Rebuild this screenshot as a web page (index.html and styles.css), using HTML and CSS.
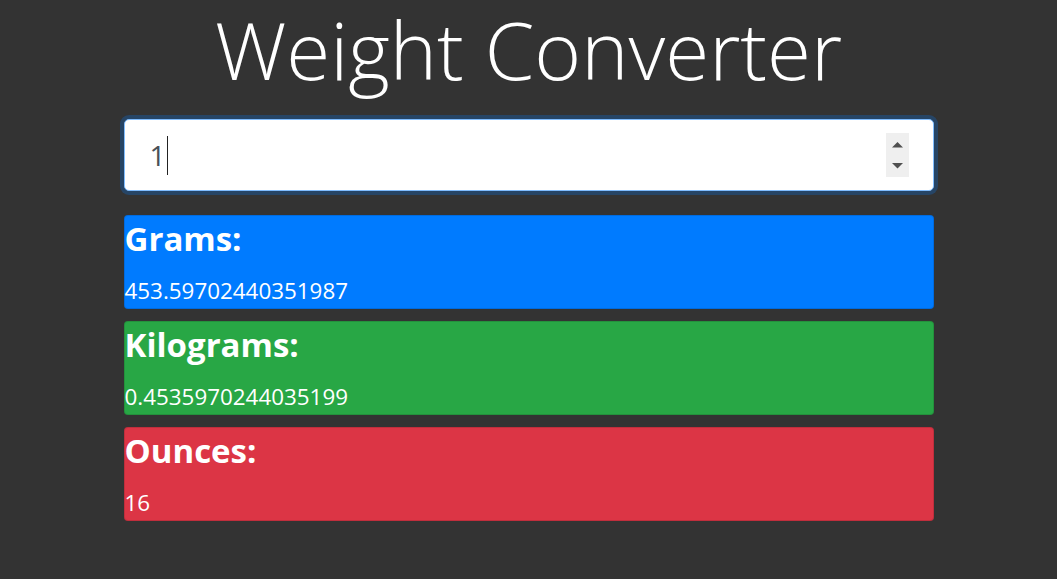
FILE: index.html
```html
<!DOCTYPE html>
<html lang="en">
<head>
<meta charset="utf-8">
<title>Weight Converter</title>
<link rel="stylesheet" href="styles.css">
</head>
<body>
<main class="page">
  <h1 class="title">Weight Converter</h1>
  <div class="field" role="spinbutton" aria-valuenow="1" aria-label="Pounds">
    <span class="field-value">1</span><span class="caret"></span>
    <span class="spinner" aria-hidden="true">
      <svg width="23" height="44" viewBox="0 0 23 44">
        <path d="M6 14.5 L11.5 9 L17 14.5 Z" fill="#505050"/>
        <path d="M6 30 L17 30 L11.5 35.5 Z" fill="#505050"/>
      </svg>
    </span>
  </div>
  <section class="results">
    <div class="result result-grams">
      <h2 class="result-label">Grams:</h2>
      <div class="result-value">453.59702440351987</div>
    </div>
    <div class="result result-kg">
      <h2 class="result-label">Kilograms:</h2>
      <div class="result-value">0.4535970244035199</div>
    </div>
    <div class="result result-oz">
      <h2 class="result-label">Ounces:</h2>
      <div class="result-value">16</div>
    </div>
  </section>
</main>
</body>
</html>
```
FILE: styles.css
```css
* { box-sizing: border-box; }
html, body {
  margin: 0;
  padding: 0;
  background: #333333;
  height: 100%;
}
body {
  font-family: "Open Sans", "Noto Sans", "Liberation Sans", sans-serif;
  color: #fff;
}
.page {
  width: 810px;
  margin: 0 auto;
  display: flex;
  flex-direction: column;
}
.title {
  margin: 0 0 24px;
  padding-top: 3px;
  font-size: 80px;
  font-weight: 300;
  line-height: 92px;
  text-align: center;
  color: #fff;
}
.field {
  height: 72px;
  background: #fff;
  border: 1px solid #80bdff;
  border-radius: 5px;
  box-shadow: 0 0 0 4px rgba(0, 123, 255, 0.25);
  display: flex;
  align-items: center;
  padding: 0 24px 0 25px;
  color: #495057;
  font-size: 28px;
  line-height: 40px;
}
.field-value {
  display: block;
}
.caret {
  width: 1px;
  height: 39px;
  background: #222;
  margin-left: 1px;
}
.spinner {
  margin-left: auto;
  width: 23px;
  height: 44px;
  background: #efefef;
  display: flex;
}
.results {
  margin-top: 24px;
  display: flex;
  flex-direction: column;
  gap: 12px;
}
.result {
  height: 94px;
  border: 1px solid rgba(0, 0, 0, 0.125);
  border-radius: 4px;
  color: #fff;
}
.result-grams { background: #007bff; }
.result-kg { background: #28a745; }
.result-oz { background: #dc3545; }
.result-label {
  margin: 0;
  font-size: 33px;
  font-weight: 700;
  line-height: 46px;
}
.result-value {
  margin-top: 14px;
  font-size: 22.4px;
  line-height: 30px;
}
```
